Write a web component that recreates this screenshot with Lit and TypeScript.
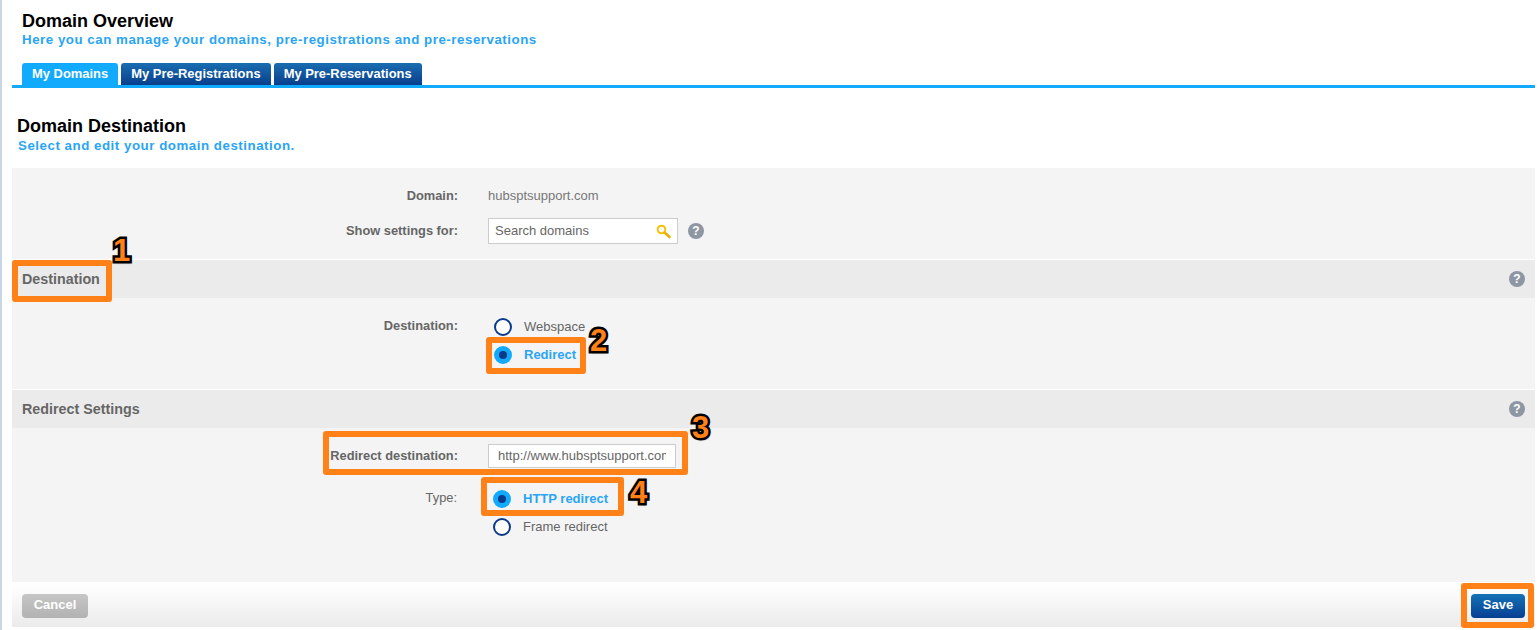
import { LitElement, html, css } from "lit";
import { customElement } from "lit/decorators.js";

const help = html`<span class="help">?</span>`;

@customElement("app-root")
export class AppRoot extends LitElement {
  static styles = css`
    :host { display: block; width: 1539px; height: 630px; position: relative; overflow: hidden; background: #fff; font-family: "Liberation Sans", Arial, sans-serif; color: #666; font-size: 13px; }
    .strip { display: flex; height: 630px; }
    .edge { width: 2px; background: #c9d6e8; flex: none; }
    .main { margin-left: 10px; width: 1523px; display: flex; flex-direction: column; }
    .top { padding: 12px 0 0 10px; }
    h1 { margin: 0; font-size: 18px; line-height: 19px; color: #000; font-weight: bold; }
    .sub { font-size: 13.3px; font-weight: bold; color: #2aa5f5; letter-spacing: 0.53px; line-height: 16px; margin-top: 1px; }
    .head2 .sub { margin-top: 2px; }
    .tabs { display: flex; gap: 3px; margin-top: 15px; height: 22px; }
    .tab { color: #fff; font-weight: bold; font-size: 12.95px; line-height: 21px; padding: 0 10px; border-radius: 3px 3px 0 0; background: linear-gradient(#1a6db0, #093f8e); }
    .tab.on { background: #12aafc; }
    .rule { height: 3px; background: #12aafc; }
    .head2 { padding: 28px 0 0 6px; height: 52px; box-sizing: content-box; }
    .head2 h1 { line-height: 20px; margin-left: -1px; }
    .panel { background: #f4f4f4; flex: none; height: 459px; display: flex; flex-direction: column; }
    .row { display: grid; grid-template-columns: 446px 1fr; column-gap: 30px; align-items: center; }
    .lbl { text-align: right; font-weight: bold; color: #666; font-size: 12.85px; }
    .lbl.n { font-weight: normal; }
    .lbl.up { padding-bottom: 2px; }
    .val { display: flex; align-items: center; }
    .intro { height: 92px; border-bottom: 1px solid #fff; box-sizing: border-box; padding-top: 18px; display: flex; flex-direction: column; gap: 14px; flex: none; }
    .intro .first { height: 18px; }
    .domain { color: #777; }
    .search { width: 190px; height: 26px; box-sizing: border-box; border: 1px solid #ccc; background: #fff; display: flex; align-items: center; justify-content: space-between; padding: 0 6px; color: #666; }
    .t { padding-bottom: 2px; }
    .help { width: 16px; height: 16px; border-radius: 50%; background: #8e96a3; color: #fff; font-weight: bold; font-size: 12px; line-height: 16px; text-align: center; display: block; flex: none; }
    .search + .help { margin-left: 10px; }
    .sec { height: 38px; background: #ebebeb; display: flex; align-items: center; justify-content: space-between; padding: 0 10px; font-weight: bold; font-size: 14.3px; color: #666; flex: none; }
    .b1 { height: 92px; box-sizing: border-box; border-bottom: 1px solid #fff; padding-top: 20px; flex: none; }
    .b1 .row, .b2 .row { align-items: start; }
    .b1 .lbl { line-height: 16px; }
    .radios { display: flex; flex-direction: column; gap: 10px; padding-left: 6px; }
    .radio { display: flex; align-items: center; gap: 12px; height: 18px; color: #666; }
    .radio.on { color: #2aa5f5; font-weight: bold; }
    .dot { width: 18px; height: 18px; box-sizing: border-box; border-radius: 50%; border: 2px solid #0b3a8a; background: #fff; flex: none; }
    .radio.on .dot { border: 5px solid #12aafc; background: #0b3a8a; }
    .b2 { flex: none; height: 154px; padding-top: 16px; box-sizing: border-box; display: flex; flex-direction: column; gap: 22px; }
    .url { width: 188px; height: 24px; box-sizing: border-box; border: 1px solid #ccc; background: #fff; padding: 0 9px; line-height: 22px; color: #666; }
    .clip { display: block; overflow: hidden; white-space: nowrap; }
    .b2 .radios { padding-left: 5px; }
    .b2 .lbl.n { line-height: 16px; padding-right: 1px; }
    .b2 .lbl.d { line-height: 24px; }
    .foot { flex: none; height: 45px; border-top: 2px solid #fff; box-sizing: border-box; background: linear-gradient(#fff, #ebebeb); display: flex; justify-content: space-between; align-items: center; padding: 0 10px; }
    .btn { height: 24px; line-height: 22px; border-radius: 4px; color: #fff; font-weight: bold; font-size: 13px; text-align: center; }
    .cancel { width: 66px; background: linear-gradient(#c6c6c6, #b2b2b2); }
    .save { width: 54px; background: linear-gradient(#1572b6, #063f92); }
    .box { position: absolute; border: 6px solid #ff8118; border-radius: 3px; box-sizing: border-box; }
    .num { position: absolute; font-family: "Liberation Sans", Arial, sans-serif; font-weight: bold; font-size: 31px; line-height: 30px; color: #ff8118; -webkit-text-stroke: 5px #000; paint-order: stroke fill; text-shadow: 1px 2px 2px rgba(0,0,0,.4); }
  `;

  render() {
    return html`
      <div class="strip">
        <div class="edge"></div>
        <div class="main">
          <div class="top">
            <h1>Domain Overview</h1>
            <div class="sub">Here you can manage your domains, pre-registrations and pre-reservations</div>
            <div class="tabs">
              <div class="tab on">My Domains</div>
              <div class="tab">My Pre-Registrations</div>
              <div class="tab">My Pre-Reservations</div>
            </div>
          </div>
          <div class="rule"></div>
          <div class="head2">
            <h1>Domain Destination</h1>
            <div class="sub">Select and edit your domain destination.</div>
          </div>
          <div class="panel">
            <div class="intro">
              <div class="row first"><div class="lbl">Domain:</div><div class="val domain">hubsptsupport.com</div></div>
              <div class="row"><div class="lbl up">Show settings for:</div>
                <div class="val">
                  <div class="search"><span class="t">Search domains</span>
                    <svg width="15" height="15" viewBox="0 0 15 15"><circle cx="5.5" cy="5.5" r="3.8" fill="none" stroke="#f5c400" stroke-width="2"/><path d="M8.5 8.5l5 4.5" stroke="#e8b400" stroke-width="2.6" stroke-linecap="round"/></svg>
                  </div>
                  ${help}
                </div>
              </div>
            </div>
            <div class="sec"><span>Destination</span>${help}</div>
            <div class="b1">
              <div class="row"><div class="lbl">Destination:</div>
                <div class="radios">
                  <div class="radio"><span class="dot"></span><span class="t">Webspace</span></div>
                  <div class="radio on"><span class="dot"></span><span class="t">Redirect</span></div>
                </div>
              </div>
            </div>
            <div class="sec"><span>Redirect Settings</span>${help}</div>
            <div class="b2">
              <div class="row"><div class="lbl d">Redirect destination:</div><div class="url"><span class="clip">http://www.hubsptsupport.com</span></div></div>
              <div class="row"><div class="lbl n">Type:</div>
                <div class="radios">
                  <div class="radio on"><span class="dot"></span><span class="t">HTTP redirect</span></div>
                  <div class="radio"><span class="dot"></span><span class="t">Frame redirect</span></div>
                </div>
              </div>
            </div>
            <div class="foot">
              <div class="btn cancel">Cancel</div>
              <div class="btn save">Save</div>
            </div>
          </div>
        </div>
      </div>
      <div class="box" style="left:12px;top:260px;width:100px;height:42px"></div>
      <div class="box" style="left:486px;top:337px;width:100px;height:37px"></div>
      <div class="box" style="left:323px;top:431px;width:365px;height:44px"></div>
      <div class="box" style="left:481px;top:477px;width:143px;height:39px"></div>
      <div class="box" style="left:1461px;top:583px;width:73px;height:45px"></div>
      <div class="num" style="left:113px;top:236px">1</div>
      <div class="num" style="left:590px;top:326px">2</div>
      <div class="num" style="left:692px;top:413px">3</div>
      <div class="num" style="left:630px;top:478px">4</div>
    `;
  }
}
